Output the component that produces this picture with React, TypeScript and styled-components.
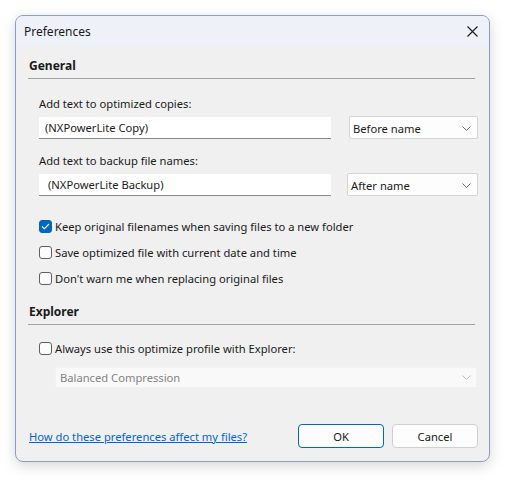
import React, { useState } from 'react';
import { styled, createGlobalStyle } from 'styled-components';

const GlobalStyle = createGlobalStyle`
  html, body {
    margin: 0;
    padding: 0;
    background: #ffffff;
  }
  body {
    font-family: "Noto Sans", "Open Sans", sans-serif;
    font-size: 11.2px;
    color: #1a1a1a;
  }
`

type Choice = {
  id: string
  label: string
  checked: boolean
}

const initialChoices: Choice[] = [
  { id: 'keep', label: 'Keep original filenames when saving files to a new folder', checked: true },
  { id: 'date', label: 'Save optimized file with current date and time', checked: false },
  { id: 'warn', label: "Don't warn me when replacing original files", checked: false },
]

const Chevron = ({ color }: { color: string }) => (
  <svg width="9" height="5" viewBox="0 0 9 5">
    <path d="M0.5 0.5 L4.5 4.5 L8.5 0.5" fill="none" stroke={color} strokeWidth="1" />
  </svg>
)

function App() {
  const [choices, setChoices] = useState(initialChoices)
  const [explorer, setExplorer] = useState(false)

  const toggle = (id: string) => {
    setChoices(choices.map((c) => (c.id === id ? { ...c, checked: !c.checked } : c)))
  }

  return (
    <Page>
      <GlobalStyle />
      <Window>
        <TitleBar>
          <Title>Preferences</Title>
          <CloseButton aria-label="Close">
            <svg width="11" height="11" viewBox="0 0 11 11">
              <path d="M0.5 0.5 L10.5 10.5 M10.5 0.5 L0.5 10.5" stroke="#1a1a1a" strokeWidth="1.1" />
            </svg>
          </CloseButton>
        </TitleBar>
        <Body>
          <Section>
            <SectionTitle>General</SectionTitle>
            <SectionContent $top={17}>
              <FieldLabel>Add text to optimized copies:</FieldLabel>
              <FieldRow>
                <TextInput $indent={6}>(NXPowerLite Copy)</TextInput>
                <Select $width={129}>
                  <span>Before name</span>
                  <Chevron color="#6a6a6a" />
                </Select>
              </FieldRow>
              <FieldLabel>Add text to backup file names:</FieldLabel>
              <FieldRow>
                <TextInput $indent={9}>(NXPowerLite Backup)</TextInput>
                <Select $width={131}>
                  <span>After name</span>
                  <Chevron color="#6a6a6a" />
                </Select>
              </FieldRow>
              <Checks>
                {choices.map((c) => (
                  <CheckRow key={c.id} onClick={() => toggle(c.id)}>
                    <Box $checked={c.checked}>
                      {c.checked && (
                        <svg width="9" height="7" viewBox="0 0 9 7">
                          <path d="M1 3.5 L3.4 5.8 L8 1" fill="none" stroke="#fff" strokeWidth="1.1" />
                        </svg>
                      )}
                    </Box>
                    <span>{c.label}</span>
                  </CheckRow>
                ))}
              </Checks>
            </SectionContent>
          </Section>
          <Section>
            <SectionTitle>Explorer</SectionTitle>
            <SectionContent $top={15}>
              <CheckRow onClick={() => setExplorer(!explorer)}>
                <Box $checked={explorer} />
                <span>Always use this optimize profile with Explorer:</span>
              </CheckRow>
              <DisabledSelect>
                <span>Balanced Compression</span>
                <Chevron color="#bcbcbc" />
              </DisabledSelect>
            </SectionContent>
          </Section>
          <Footer>
            <HelpLink href="#">How do these preferences affect my files?</HelpLink>
            <Buttons>
              <DialogButton $primary>OK</DialogButton>
              <DialogButton>Cancel</DialogButton>
            </Buttons>
          </Footer>
        </Body>
      </Window>
    </Page>
  );
}

export default App;

const Page = styled.div`
  width: 506px;
  height: 478px;
  padding: 15px 16px 16px 15px;
  box-sizing: border-box;
`

const Window = styled.div`
  width: 475px;
  height: 447px;
  box-sizing: border-box;
  border: 1px solid #8e9bc9;
  border-radius: 8px;
  overflow: hidden;
  background: #f0f0f0;
  box-shadow: 0 4px 14px rgba(0, 0, 0, 0.16);
  display: flex;
  flex-direction: column;
`

const TitleBar = styled.div`
  height: 30px;
  background: #eef2f8;
  display: flex;
  align-items: center;
  justify-content: space-between;
  padding: 0 9px 0 8px;
  flex-shrink: 0;
  font-size: 12px;
`

const Title = styled.span`
  color: #1a1a1a;
`

const CloseButton = styled.div`
  width: 16px;
  height: 16px;
  display: flex;
  align-items: center;
  justify-content: center;
`

const Body = styled.div`
  flex: 1;
  display: flex;
  flex-direction: column;
  padding: 12px 11px 0 12px;
`

const Section = styled.div`
  display: flex;
  flex-direction: column;
`

const SectionTitle = styled.div`
  font-weight: bold;
  font-size: 12px;
  line-height: 16px;
  padding: 0 0 4px 1px;
  margin-right: 3px;
  border-bottom: 1px solid #a0a0a0;
`

const SectionContent = styled.div<{ $top: number }>`
  display: flex;
  flex-direction: column;
  padding: ${(p) => p.$top}px 0 0 11px;
`

const FieldLabel = styled.div`
  line-height: 16px;
  margin-bottom: 4px;
`

const FieldRow = styled.div`
  display: flex;
  justify-content: space-between;
  align-items: center;
  margin-bottom: 14px;
`

const TextInput = styled.div<{ $indent: number }>`
  width: 292px;
  height: 22px;
  box-sizing: border-box;
  background: #ffffff;
  border-bottom: 1px solid #8a8a8a;
  display: flex;
  align-items: center;
  padding-left: ${(p) => p.$indent}px;
  padding-top: 1px;
`

const Select = styled.div<{ $width: number }>`
  width: ${(p) => p.$width}px;
  height: 23px;
  box-sizing: border-box;
  background: #fdfdfd;
  border: 1px solid #d4d4d4;
  border-radius: 2px;
  display: flex;
  align-items: center;
  justify-content: space-between;
  padding: 1px 6px 0 3px;
`

const Checks = styled.div`
  display: flex;
  flex-direction: column;
  gap: 10px;
  margin-top: 8px;
  margin-bottom: 18px;
`

const CheckRow = styled.label`
  display: flex;
  align-items: center;
  gap: 3px;
  height: 16px;
  cursor: default;
`

const Box = styled.span<{ $checked: boolean }>`
  width: 13px;
  height: 13px;
  box-sizing: border-box;
  border-radius: 3px;
  border: 1px solid ${(p) => (p.$checked ? '#0067c0' : '#5f5f5f')};
  background: ${(p) => (p.$checked ? '#0067c0' : '#fbfbfb')};
  display: flex;
  align-items: center;
  justify-content: center;
`

const DisabledSelect = styled.div`
  margin: 11px 1px 0 16px;
  height: 21px;
  box-sizing: border-box;
  background: #f9f9f9;
  border: 1px solid #f2f2f2;
  color: #838383;
  display: flex;
  align-items: center;
  justify-content: space-between;
  padding: 0 5px 0 4px;
`

const Footer = styled.div`
  margin-top: auto;
  margin-bottom: 13px;
  display: flex;
  align-items: center;
  justify-content: space-between;
  padding-left: 1px;
`

const HelpLink = styled.a`
  color: #0066cc;
  text-decoration: underline;
`

const Buttons = styled.div`
  display: flex;
  gap: 8px;
`

const DialogButton = styled.button<{ $primary?: boolean }>`
  width: 86px;
  height: 24px;
  font-family: inherit;
  font-size: 11.2px;
  color: #1a1a1a;
  background: #fdfdfd;
  border: 1px solid ${(p) => (p.$primary ? '#0067c0' : '#d0d0d0')};
  border-radius: 4px;
  padding: 0;
`
